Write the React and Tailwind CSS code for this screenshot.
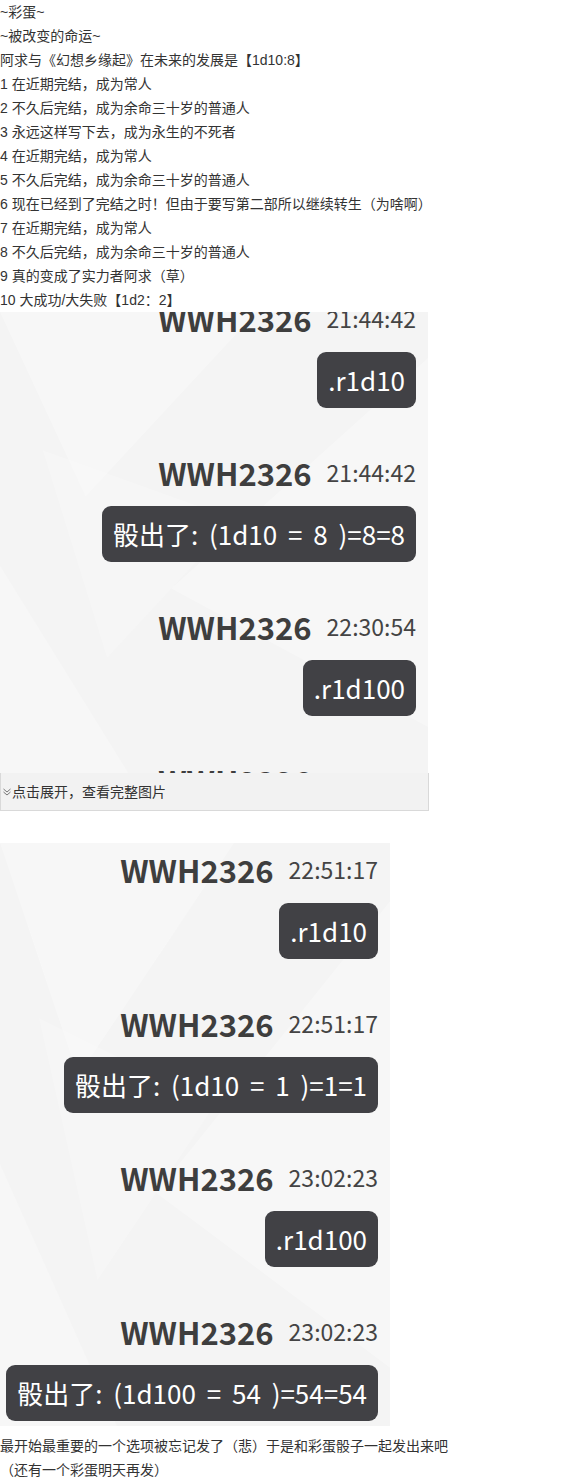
import React from 'react'

const FONT = { fontFamily: '"Liberation Sans", "Noto Sans CJK SC", sans-serif' }
const CHAT = { fontFamily: '"Noto Sans CJK SC", "Noto Sans", sans-serif' }

const lines = [
    '~彩蛋~',
    '~被改变的命运~',
    '阿求与《幻想乡缘起》在未来的发展是【1d10:8】',
    '1 在近期完结，成为常人',
    '2 不久后完结，成为余命三十岁的普通人',
    '3 永远这样写下去，成为永生的不死者',
    '4 在近期完结，成为常人',
    '5 不久后完结，成为余命三十岁的普通人',
    '6 现在已经到了完结之时！但由于要写第二部所以继续转生（为啥啊）',
    '7 在近期完结，成为常人',
    '8 不久后完结，成为余命三十岁的普通人',
    '9 真的变成了实力者阿求（草）',
    '10 大成功/大失败【1d2：2】',
]

const first = [
    { time: '21:44:42', text: '.r1d10' },
    { time: '21:44:42', text: '骰出了: (1d10 = 8 )=8=8' },
    { time: '22:30:54', text: '.r1d100' },
    { time: '22:30:54', text: '...' },
]

const second = [
    { time: '22:51:17', text: '.r1d10' },
    { time: '22:51:17', text: '骰出了: (1d10 = 1 )=1=1' },
    { time: '23:02:23', text: '.r1d100' },
    { time: '23:02:23', text: '骰出了: (1d100 = 54 )=54=54' },
]

// faint white shards like the screenshot's wallpaper
function Texture() {
    return (
        <svg className="absolute inset-0 w-full h-full" preserveAspectRatio="none" viewBox="0 0 100 100">
            <polygon points="0,0 60,0 20,40" fill="#ffffff" opacity="0.3" />
            <polygon points="100,10 40,60 100,90" fill="#ffffff" opacity="0.3" />
            <polygon points="0,55 30,100 0,100" fill="#ffffff" opacity="0.25" />
            <polygon points="10,30 55,45 25,75" fill="#ffffff" opacity="0.2" />
        </svg>
    )
}

function Message({ time, text, last }) {
    return (
        <div className={last ? 'pb-[5px]' : 'pb-[47px]'}>
            <div className="flex justify-end items-center h-[34px] gap-[15px]">
                <span className="text-[31px] font-bold text-[#3e3e3e] leading-none">WWH2326</span>
                <span className="text-[23px] text-[#444] leading-none">{time}</span>
            </div>
            <div className="flex justify-end mt-[17px]">
                <div className="bg-[#414145] text-white text-[26px] h-[56px] leading-[56px] px-[11px] rounded-[9px] whitespace-nowrap [word-spacing:5px]">
                    {text}
                </div>
            </div>
        </div>
    )
}

export default function App() {
    return (
        <div className="bg-white text-[#333] text-[14px] leading-[24px]" style={FONT}>
            {lines.map((l, i) => (
                <p key={i} className="whitespace-nowrap">{l}</p>
            ))}

            <div className="relative w-[428px] h-[461px] overflow-hidden bg-[#f4f4f4]" style={CHAT}>
                <Texture />
                <div className="relative pr-[12px] -mt-[11px]">
                    {first.map((m, i) => (
                        <Message key={i} {...m} />
                    ))}
                </div>
            </div>
            <div className="w-[429px] h-[38px] bg-[#f2f2f2] border border-t-0 border-[#d9d9d9] flex items-center text-[14px] text-[#333]">
                <svg width="10" height="10" viewBox="0 0 10 10" className="ml-[1px]">
                    <path d="M1.5 2 L5 5 L8.5 2 M1.5 5 L5 8 L8.5 5" fill="none" stroke="#777" strokeWidth="1" />
                </svg>
                <span>点击展开，查看完整图片</span>
            </div>

            <div className="h-[32px]" />

            <div className="relative w-[390px] bg-[#f4f4f4] pt-[9px]" style={CHAT}>
                <Texture />
                <div className="relative pr-[12px]">
                    {second.map((m, i) => (
                        <Message key={i} {...m} last={i === second.length - 1} />
                    ))}
                </div>
            </div>

            <div className="mt-[8px]">
                <p>最开始最重要的一个选项被忘记发了（悲）于是和彩蛋骰子一起发出来吧</p>
                <p>（还有一个彩蛋明天再发）</p>
            </div>
        </div>
    )
}
